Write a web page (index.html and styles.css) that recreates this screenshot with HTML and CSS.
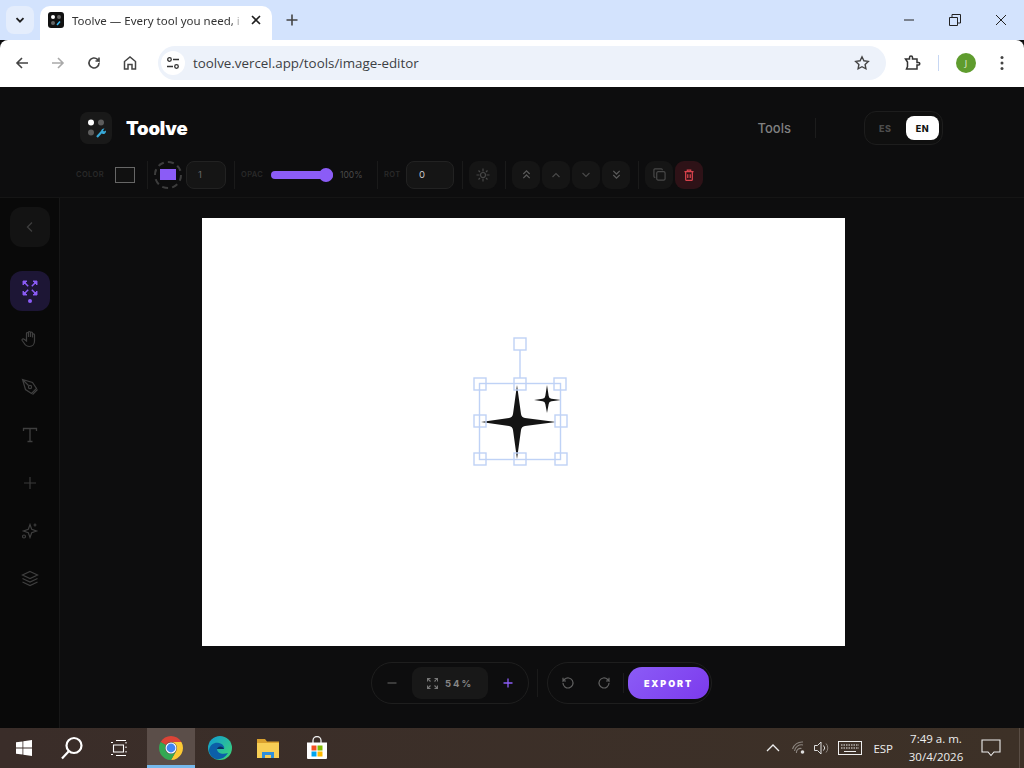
FILE: index.html
```html
<!DOCTYPE html>
<html lang="en">
<head>
<meta charset="utf-8">
<title>Toolve</title>
<link rel="stylesheet" href="styles.css">
</head>
<body>
<div class="tabstrip">
  <button class="tabsearch"><svg width="12" height="12" viewBox="0 0 12 12"><path d="M2.5 4.2 6 7.7l3.5-3.5" fill="none" stroke="#1f1f1f" stroke-width="1.8"/></svg></button>
  <div class="tab">
    <svg class="favicon" width="16" height="16" viewBox="0 0 16 16"><rect width="16" height="16" rx="3" fill="#111"/><circle cx="5" cy="5" r="2" fill="#fff"/><circle cx="11" cy="5" r="2" fill="#666"/><circle cx="5" cy="11" r="2" fill="#666"/><path d="M9 13l3-3.500" stroke="#38bdf8" stroke-width="1.500"/></svg>
    <span class="tabtitle">Toolve — Every tool you need, i</span>
    <svg class="tabclose" width="12" height="12" viewBox="0 0 12 12"><path d="M2 2l8 8M10 2l-8 8" stroke="#1f1f1f" stroke-width="1.600"/></svg>
  </div>
  <svg class="newtab" width="14" height="14" viewBox="0 0 14 14"><path d="M7 1.500v11M1.500 7h11" stroke="#444" stroke-width="1.600"/></svg>
  <div class="winctl">
    <svg width="12" height="12" viewBox="0 0 12 12"><path d="M1 6h10" stroke="#222"/></svg>
    <svg width="12" height="12" viewBox="0 0 12 12"><path d="M.5 3.500h8v8h-8zM3 3.500V.5h8.500V9H8.500" fill="none" stroke="#222"/></svg>
    <svg width="12" height="12" viewBox="0 0 12 12"><path d="M1 1l10 10M11 1L1 11" stroke="#222"/></svg>
  </div>
</div>
<div class="chromebar">
  <div class="navicons">
    <svg width="16" height="16" viewBox="0 0 16 16"><path d="M14 8H3M8 3 3 8l5 5" fill="none" stroke="#444" stroke-width="1.600"/></svg>
    <svg width="16" height="16" viewBox="0 0 16 16"><path d="M2 8h11M8 3l5 5-5 5" fill="none" stroke="#a9a9a9" stroke-width="1.600"/></svg>
    <svg width="16" height="16" viewBox="0 0 16 16"><path d="M13 8a5 5 0 1 1-1.500-3.600L13 6V2.500M13 6H9.500" fill="none" stroke="#444" stroke-width="1.600"/></svg>
    <svg width="16" height="16" viewBox="0 0 16 16"><path d="M2.500 14V6.500L8 2l5.500 4.500V14H10V9.500H6V14z" fill="none" stroke="#444" stroke-width="1.500"/></svg>
  </div>
  <div class="omnibox">
    <span class="siteinfo"><svg width="14" height="14" viewBox="0 0 14 14" fill="none" stroke="#333" stroke-width="1.300"><circle cx="3.500" cy="3.500" r="1.800"/><path d="M7 3.500h6M1 10.500h6"/><circle cx="10.500" cy="10.500" r="1.800"/></svg></span>
    <span class="url">toolve.vercel.app/tools/image-editor</span>
    <svg class="star" width="16" height="16" viewBox="0 0 16 16"><path d="M8 1.800l1.900 4 4.400.6-3.200 3 .8 4.400L8 11.700l-3.900 2.100.8-4.400-3.200-3 4.400-.6z" fill="none" stroke="#444" stroke-width="1.400"/></svg>
  </div>
  <svg class="puzzle" width="18" height="18" viewBox="0 0 18 18"><path d="M2.500 5h4V3.500a1.500 1.500 0 0 1 3 0V5H14v3.500h1.500a1.300 1.300 0 0 1 0 2.600H14V15H3.500l1-2.500V8z" fill="none" stroke="#333" stroke-width="1.500"/></svg>
  <span class="chromesep"></span>
  <span class="avatar">J</span>
  <svg class="kebab" width="4" height="16" viewBox="0 0 4 16"><circle cx="2" cy="2.500" r="1.500" fill="#444"/><circle cx="2" cy="8" r="1.500" fill="#444"/><circle cx="2" cy="13.500" r="1.500" fill="#444"/></svg>
</div>

<div class="app">
  <header class="apphead">
    <div class="brand">
      <span class="logo"><svg width="32" height="32" viewBox="0 0 32 32"><circle cx="11" cy="10.500" r="3" fill="#fff"/><circle cx="21" cy="10.500" r="3" fill="#5c5c5c"/><circle cx="11" cy="20.500" r="3" fill="#5c5c5c"/><path d="M17 25l5-5.500" stroke="#38a9d8" stroke-width="2.200"/><path d="M21 19.500a3 3 0 0 1 3.500-3l-1.500 2 1 1 2-1a3 3 0 0 1-3.500 3.500z" fill="#38a9d8"/></svg></span>
      <span class="brandname">Toolve</span>
    </div>
    <nav class="headnav">
      <a class="navlink">Tools</a>
      <span class="headsep"></span>
      <div class="lang"><span class="lang-es">ES</span><span class="lang-en">EN</span></div>
    </nav>
  </header>

  <div class="optbar">
    <div class="optgroup g-color"><span class="optlabel w-color">COLOR</span><span class="swatch"></span></div>
    <span class="vsep"></span>
    <div class="optgroup g-stroke"><span class="fillring"><span class="fillrect"></span></span><span class="numinput w40">1</span></div>
    <span class="vsep"></span>
    <div class="optgroup g-opac"><span class="optlabel w-opac">OPAC</span><span class="slider"><span class="thumb"></span></span><span class="optvalue">100%</span></div>
    <span class="vsep"></span>
    <div class="optgroup g-rot"><span class="optlabel w-rot">ROT</span><span class="numinput w48 bright">0</span></div>
    <span class="vsep"></span>
    <div class="optgroup"><span class="iconbtn"><svg width="14" height="14" viewBox="0 0 14 14" fill="none" stroke="#474747" stroke-width="1.200"><circle cx="7" cy="7" r="2.500"/><path d="M7 .5v3M7 10.500v3M.5 7h3M10.500 7h3M2.500 2.500l1.500 1.500M10 10l1.500 1.500M11.500 2.500 10 4M4 10l-1.500 1.500"/></svg></span></div>
    <span class="vsep"></span>
    <div class="optgroup g-order">
      <span class="iconbtn"><svg width="11" height="11" viewBox="0 0 12 12" fill="none" stroke="#5a5a5a" stroke-width="1.300"><path d="M2.500 5.500 6 2l3.500 3.500M2.500 10 6 6.500 9.500 10"/></svg></span>
      <span class="iconbtn"><svg width="12" height="12" viewBox="0 0 12 12" fill="none" stroke="#484848" stroke-width="1.200"><path d="M2.500 8 6 4.500 9.500 8"/></svg></span>
      <span class="iconbtn"><svg width="12" height="12" viewBox="0 0 12 12" fill="none" stroke="#484848" stroke-width="1.200"><path d="M2.500 4 6 7.500 9.500 4"/></svg></span>
      <span class="iconbtn"><svg width="11" height="11" viewBox="0 0 12 12" fill="none" stroke="#5a5a5a" stroke-width="1.300"><path d="M2.500 2 6 5.500 9.500 2M2.500 6.500 6 10l3.500-3.500"/></svg></span>
    </div>
    <span class="vsep"></span>
    <div class="optgroup g-order">
      <span class="iconbtn"><svg width="13" height="13" viewBox="0 0 14 14" fill="none" stroke="#484848" stroke-width="1.300"><rect x="4" y="4" width="9" height="9" rx="1.500"/><path d="M10 2.500V2a1 1 0 0 0-1-1H2a1 1 0 0 0-1 1v7a1 1 0 0 0 1 1h.5"/></svg></span>
      <span class="iconbtn danger"><svg width="10" height="12" viewBox="0 0 12 14" fill="none" stroke="#d9434c" stroke-width="1.500"><path d="M.5 3h11M4 3V1.200h4V3M2 3v9.500a1 1 0 0 0 1 1h6a1 1 0 0 0 1-1V3M4.500 6v4.500M7.500 6v4.500"/></svg></span>
    </div>
  </div>

  <div class="workspace">
    <aside class="sidebar">
      <span class="sidebtn back"><svg width="14" height="14" viewBox="0 0 14 14" fill="none" stroke="#3d3d3d" stroke-width="1.400"><path d="M9 2.500 4.500 7 9 11.500"/></svg></span>
      <span class="sidebtn active">
        <svg width="16" height="16" viewBox="0 0 16 16" fill="#8b5cf6" stroke="#8b5cf6" stroke-width=".9"><path d="M1 1h4L1 5zM15 1h-4L15 5zM1 15h4L1 11zM15 15h-4L15 11z"/><path d="M2 2l4.200 4.200M14 2 9.800 6.200M2 14l4.200-4.200M14 14 9.800 9.800" stroke-width="1.500"/></svg>
        <i class="dot"></i>
      </span>
      <span class="sidetool t-hand"><svg width="18" height="18" viewBox="0 0 18 18" fill="none" stroke="#3f3f3f" stroke-width="1.200"><path d="M5.500 8V3.500a1 1 0 0 1 2 0V7M7.500 7V2.500a1 1 0 0 1 2 0V7M9.500 7V3a1 1 0 0 1 2 0v4.500M11.500 7.500V4.800a1 1 0 0 1 2 0V11c0 3-2 5.500-5 5.500-2.500 0-4-1-5.500-3.500L1.200 10.500c-.8-1.300 1-2.300 2-1.200L5.500 11V8"/></svg></span>
      <span class="sidetool"><svg width="18" height="18" viewBox="0 0 18 18" fill="none" stroke="#3f3f3f" stroke-width="1.200"><path d="M1.500 1.500l10 3 4 6-5 5-6-4zM1.500 1.500l6 6"/><circle cx="9" cy="9" r="1.600"/><path d="M11.500 16.500l5-5"/></svg></span>
      <span class="sidetool"><svg width="16" height="16" viewBox="0 0 16 16" fill="none" stroke="#3f3f3f" stroke-width="1.300"><path d="M1.500 4V1.500h13V4M8 1.500v13M5.500 14.500h5"/></svg></span>
      <span class="sidetool"><svg width="14" height="14" viewBox="0 0 14 14" fill="none" stroke="#3a3a3a" stroke-width="1.200"><path d="M7 1v12M1 7h12"/></svg></span>
      <span class="sidetool"><svg width="18" height="18" viewBox="0 0 18 18" fill="none" stroke="#3f3f3f" stroke-width="1.200"><path d="M9 2.500l1.700 4.800 4.800 1.700-4.800 1.700L9 15.500l-1.700-4.800L2.500 9l4.800-1.700z"/><path d="M14 1.500v3M12.500 3h3"/><circle cx="3" cy="14.500" r="1.500"/></svg></span>
      <span class="sidetool"><svg width="18" height="18" viewBox="0 0 18 18" fill="none" stroke="#3f3f3f" stroke-width="1.200"><path d="M9 1.500l7.500 3.500L9 8.500 1.500 5zM1.500 8.500 9 12l7.500-3.500M1.500 12 9 15.500l7.500-3.500"/></svg></span>
    </aside>
    <main class="stage">
      <div class="canvas">
        <svg class="overlay" width="643" height="428" viewBox="202 218 643 428">
          <path class="ink" d="M517 385L521 414Q521.500 417.500 525 418L556 422L525 426Q521.500 426.500 521 430L517 459L513 430Q512.500 426.500 509 426L481 422L509 418Q512.500 417.500 513 414Z"/>
          <path class="ink" d="M547 385L548.700 396Q549 398.500 551.500 398.800L561 400L551.500 401.200Q549 401.500 548.700 404L547 413L545.300 404Q545 401.500 542.500 401.200L534 400L542.500 398.800Q545 398.500 545.300 396Z"/>
          <g class="sel">
            <rect x="479.500" y="383.500" width="81" height="76"/>
            <path d="M520 350V378"/>
            <rect x="514" y="338" width="12" height="12"/>
            <rect x="474" y="378" width="12" height="12"/>
            <rect x="514" y="378" width="12" height="12"/>
            <rect x="554" y="378" width="12" height="12"/>
            <rect x="474" y="415" width="12" height="12"/>
            <rect x="555" y="415" width="12" height="12"/>
            <rect x="474" y="453" width="12" height="12"/>
            <rect x="514" y="453" width="12" height="12"/>
            <rect x="555" y="453" width="12" height="12"/>
          </g>
        </svg>
      </div>
      <div class="dock">
        <div class="pill zoompill">
          <svg width="12" height="12" viewBox="0 0 12 12"><path d="M1.500 6h9" stroke="#555" stroke-width="1.300"/></svg>
          <span class="zoomval"><svg width="11" height="11" viewBox="0 0 11 11" fill="none" stroke="#777" stroke-width="1.100"><path d="M.5 3.500v-3h3M10.500 3.500v-3h-3M.5 7.500v3h3M10.500 7.500v3h-3M1 1l2.500 2.500M10 1 7.500 3.500M1 10l2.500-2.500M10 10 7.500 7.500"/></svg><span>54%</span></span>
          <svg width="12" height="12" viewBox="0 0 12 12"><path d="M1.500 6h9M6 1.500v9" stroke="#8b5cf6" stroke-width="1.300"/></svg>
        </div>
        <span class="docksep"></span>
        <div class="pill actionpill">
          <svg class="hist" width="14" height="14" viewBox="0 0 14 14" fill="none" stroke="#5f5f5f" stroke-width="1.200"><path d="M2 7a5 5 0 1 0 1.600-3.700L2 5V1.800M2 5h3"/></svg>
          <svg class="hist" width="14" height="14" viewBox="0 0 14 14" fill="none" stroke="#5f5f5f" stroke-width="1.200"><path d="M12 7a5 5 0 1 1-1.600-3.700L12 5V1.800M12 5H9"/></svg>
          <span class="pillsep"></span>
          <button class="export">EXPORT</button>
        </div>
      </div>
    </main>
  </div>
</div>

<footer class="taskbar">
  <div class="tb-left">
    <span class="tbslot"><svg width="16" height="16" viewBox="0 0 16 16" fill="#fff"><path d="M0 2.300 6.500 1.400V7.600H0zM7.300 1.300 16 0V7.600H7.300zM0 8.400H6.500V14.600L0 13.700zM7.300 8.400H16V16L7.300 14.700z"/></svg></span>
    <span class="tbslot"><svg width="24" height="24" viewBox="0 0 24 24" fill="none" stroke="#fff" stroke-width="2.200"><circle cx="14" cy="9.500" r="7.500"/><path d="M9 15 2 22.500"/></svg></span>
    <span class="tbslot"><svg width="18" height="16" viewBox="0 0 18 16" fill="none" stroke="#fff" stroke-width="1.100"><path d="M2.500 5h10v7h-10zM0 2.500h2M5 .5h10M0 14.500h2M5 15.500h10M15 2v1.500M15 6.500v1.500M15 11v1.500"/></svg></span>
    <span class="tbslot current"><svg width="24" height="24" viewBox="0 0 24 24"><path fill="#db4437" d="M1.610 6A12 12 0 0 1 22.390 6H12A6 6 0 0 0 6.800 9Z"/><path fill="#fcc934" d="M22.390 6A12 12 0 0 1 12 24L17.200 15A6 6 0 0 0 12 6Z"/><path fill="#34a853" d="M12 24A12 12 0 0 1 1.610 6L6.800 9A6 6 0 0 0 17.200 15Z"/><circle cx="12" cy="12" r="5.500" fill="#fff"/><circle cx="12" cy="12" r="4.400" fill="#4285f4"/></svg></span>
    <span class="tbslot after-current"><svg width="24" height="24" viewBox="0 0 24 24"><defs><linearGradient id="edgeA" x1="0" y1="0" x2="1" y2="1"><stop offset="0" stop-color="#0f9ad6"/><stop offset="1" stop-color="#3fd86f"/></linearGradient></defs><circle cx="12" cy="12" r="12" fill="url(#edgeA)"/><path d="M1 14C2 8 7 6 11 7c4 1 6 4 5 6H9c0 4 5 6 11 4-3 5-8 7-12 6C4 22 1 18 1 14z" fill="#0c5fa8"/><path d="M9 13c1-3 5-3.500 7 0z" fill="#0b2f5e"/></svg></span>
    <span class="tbslot"><svg width="22" height="20" viewBox="0 0 22 20"><path d="M0 1h8l2 2.500h12V6H0z" fill="#d9a12e"/><path d="M0 5h22v15H0z" fill="#f7ce55"/><path d="M5 14h12v6h-3v-3H8v3H5z" fill="#2f8fdc"/></svg></span>
    <span class="tbslot after-current"><svg width="24" height="24" viewBox="0 0 24 24"><path d="M8 7V4.500a4 4 0 0 1 8 0V7" fill="none" stroke="#eee" stroke-width="1.300"/><path d="M2 6.500h20V22a1 1 0 0 1-1 1H3a1 1 0 0 1-1-1z" fill="#fff"/><path fill="#f25022" d="M6.500 9.500h5v5h-5z"/><path fill="#7fba00" d="M12.500 9.500h5v5h-5z"/><path fill="#00a4ef" d="M6.500 15.500h5v5h-5z"/><path fill="#ffb900" d="M12.500 15.500h5v5h-5z"/></svg></span>
  </div>
  <div class="tb-right">
    <svg class="tray t-chev" width="14" height="8" viewBox="0 0 14 8" fill="none" stroke="#eee" stroke-width="1.300"><path d="M1 7l6-6 6 6"/></svg>
    <svg class="tray t-wifi" width="14" height="14" viewBox="0 0 14 14" fill="none" stroke="#8d8680" stroke-width="1.100"><path d="M.5 8A10 10 0 0 1 11 1M2.500 10A7 7 0 0 1 11 4M4.500 12A4 4 0 0 1 9.500 7.500"/><circle cx="10.500" cy="11" r="1.800" fill="#ddd" stroke="none"/></svg>
    <svg class="tray t-vol" width="16" height="14" viewBox="0 0 16 14" fill="none" stroke="#ddd" stroke-width="1"><path d="M.5 4.500h3L7 1v12L3.500 9.500h-3zM9.500 4.500a3.500 3.500 0 0 1 0 5"/><path d="M12 2.500a6.500 6.500 0 0 1 0 9" stroke="#8d8680"/></svg>
    <svg class="tray t-kbd" width="24" height="14" viewBox="0 0 24 14" fill="none" stroke="#eee"><rect x=".5" y=".5" width="23" height="13"/><path d="M3 4h18M3 7h18" stroke-dasharray="1.500 1"/><path d="M6 10.500h12"/></svg>
    <span class="imelang">ESP</span>
    <div class="clock"><span>7:49 a. m.</span><span>30/4/2026</span></div>
    <svg class="tray t-note" width="20" height="18" viewBox="0 0 20 18" fill="none" stroke="#eee" stroke-width="1.100"><path d="M1 1h18v12h-6l-3 3.500L7 13H1z"/></svg>
    <span class="showdesk"></span>
  </div>
</footer>
</body>
</html>
```
FILE: styles.css
```css
* { box-sizing: border-box; }
html, body { margin: 0; padding: 0; }
body { width: 1024px; height: 768px; overflow: hidden; font-family: "Open Sans", "Liberation Sans", sans-serif; background: #0d0d0e; }
svg { display: block; flex: none; }

/* browser chrome */
.tabstrip { height: 40px; background: #d3e3fd; display: flex; align-items: flex-end; position: relative; }
.tabsearch { width: 28px; height: 28px; margin: 0 6px 6px 6px; border: 0; padding: 0; border-radius: 8px; background: #e4edfc; display: flex; align-items: center; justify-content: center; }
.tab { width: 232px; height: 34px; background: #fff; border-radius: 10px 10px 0 0; display: flex; align-items: center; padding: 0 10px 6px 8px; }
.favicon { margin-right: 8px; }
.tabtitle { flex: 1; font-family: "Noto Sans", "Open Sans", sans-serif; font-size: 11.500px; color: #333; white-space: nowrap; -webkit-mask-image: linear-gradient(90deg, #000 92%, transparent 100%); mask-image: linear-gradient(90deg, #000 92%, transparent 100%); }
.tabclose { margin-left: 6px; }
.newtab { margin: 0 0 13px 13px; }
.winctl { margin: 0 17px 14px auto; display: flex; gap: 34px; }
.chromebar { height: 47px; background: #fff; display: flex; align-items: center; padding: 0 0 1px 14px; border-radius: 8px 8px 0 0; }
.navicons { display: flex; gap: 20px; }
.omnibox { width: 728px; height: 34px; margin-left: 20px; border-radius: 17px; background: #edf2fa; display: flex; align-items: center; padding: 0 16px 0 3px; }
.siteinfo { width: 24px; height: 24px; border-radius: 50%; background: #fff; display: flex; align-items: center; justify-content: center; }
.url { flex: 1; margin-left: 8px; font-size: 13.350px; color: #3c4043; }
.puzzle { margin-left: 17px; }
.chromesep { width: 1px; height: 16px; background: #c7d7f3; margin-left: 17px; }
.avatar { width: 20px; height: 20px; border-radius: 50%; background: #5f9c2e; color: #e8f2dc; font-size: 9px; display: flex; align-items: center; justify-content: center; margin-left: 17px; }
.kebab { margin-left: 24px; }

/* app frame */
.app { height: 641px; background: #0d0d0e; display: flex; flex-direction: column; }
.apphead { height: 65px; flex: none; display: flex; align-items: center; justify-content: space-between; padding: 17px 81px 0 80px; }
.brand { display: flex; align-items: center; gap: 14px; }
.logo { width: 32px; height: 32px; border-radius: 8px; background: #191919; }
.brandname { font-family: Inter, "Liberation Sans", sans-serif; font-weight: 900; font-size: 18.500px; color: #fff; letter-spacing: -.2px; }
.headnav { display: flex; align-items: center; }
.navlink { font-family: Inter, "Liberation Sans", sans-serif; font-size: 13px; font-weight: 500; color: #808080; }
.headsep { width: 1px; height: 20px; background: #1c1c1c; margin: 0 48px 0 24px; }
.lang { width: 79px; height: 34px; border: 1px solid #1d1d1d; border-radius: 12px; background: #0f0f0f; display: flex; align-items: center; padding-left: 14px; font-family: Inter, "Liberation Sans", sans-serif; font-size: 9px; font-weight: 800; letter-spacing: .5px; }
.lang-es { width: 27px; color: #4d4d4d; }
.lang-en { width: 33px; height: 24px; border-radius: 8px; background: #fff; color: #111; display: flex; align-items: center; justify-content: center; }

/* options bar */
.optbar { height: 46px; flex: none; display: flex; align-items: center; padding-left: 76px; border-bottom: 1px solid #151515; font-family: Inter, "Liberation Sans", sans-serif; }
.optgroup { display: flex; align-items: center; }
.g-color { gap: 10px; padding-right: 4px; }
.g-stroke { gap: 4px; }
.g-opac { gap: 8px; }
.g-rot { gap: 6px; }
.g-order { gap: 2px; }
.vsep { width: 1px; height: 28px; background: #1a1a1a; margin: 0 6px 0 8px; }
.optlabel { font-size: 7.500px; font-weight: 600; letter-spacing: .4px; color: #292929; white-space: nowrap; }
.w-color { width: 29px; }
.w-opac { width: 22px; }
.w-rot { width: 16px; }
.swatch { width: 20px; height: 16px; border: 1px solid #666; background: #111; }
.fillring { width: 28px; height: 28px; border-radius: 50%; border: 2px dashed #3d3d3d; display: flex; align-items: center; justify-content: center; }
.fillrect { width: 16px; height: 11px; background: #8b5cf6; }
.numinput { height: 28px; border: 1px solid #222; border-radius: 8px; background: #151515; font-size: 9.500px; color: #666; display: flex; align-items: center; padding-left: 11px; }
.numinput.bright { color: #c9c9c9; padding-left: 12px; }
.w40 { width: 40px; }
.w48 { width: 48px; }
.slider { width: 62px; height: 8px; border-radius: 4px; background: #8b5cf6; position: relative; }
.thumb { position: absolute; right: 0; top: -3px; width: 14px; height: 14px; border-radius: 50%; background: #8b5cf6; }
.optvalue { width: 29px; font-size: 8.500px; color: #4a4a4a; margin-left: -1px; }
.iconbtn { width: 28px; height: 28px; border-radius: 9px; background: #151515; display: flex; align-items: center; justify-content: center; }
.iconbtn.danger { background: #2e1217; }

/* workspace */
.workspace { flex: 1; min-height: 0; display: flex; }
.sidebar { width: 60px; flex: none; border-right: 1px solid #171717; display: flex; flex-direction: column; align-items: center; padding: 9px 0 0 1px; background: #090909; }
.sidebtn { width: 40px; height: 40px; border-radius: 12px; display: flex; align-items: center; justify-content: center; flex: none; position: relative; }
.back { background: #131313; margin-bottom: 24px; }
.active { background: #1d1635; padding-bottom: 7px; }
.dot { position: absolute; bottom: 8px; left: 18px; width: 4px; height: 4px; border-radius: 50%; background: #8b5cf6; }
.sidetool { height: 48px; width: 40px; display: flex; align-items: center; justify-content: center; flex: none; }
.t-hand { margin-top: 4px; }
.stage { flex: 1; min-width: 0; display: flex; flex-direction: column; align-items: center; padding: 20px 179px 0 142px; }
.canvas { width: 643px; height: 428px; flex: none; background: #fff; position: relative; }
.overlay { position: absolute; left: 0; top: 0; }
.ink { fill: #141414; }
.sel rect, .sel path { fill: none; stroke: #bfd2f6; stroke-width: 1.400; }
.dock { display: flex; align-items: center; margin-top: 16px; margin-left: 36px; }
.pill { height: 42px; border: 1px solid #1e1e1e; border-radius: 21px; display: flex; align-items: center; flex: none; }
.zoompill { width: 158px; padding: 0 14px; justify-content: space-between; }
.zoomval { width: 76px; height: 32px; border-radius: 9px; background: #181818; display: flex; align-items: center; justify-content: center; gap: 7px; font-family: Inter, "Liberation Sans", sans-serif; font-size: 9.500px; font-weight: 700; letter-spacing: 2px; color: #858585; }
.docksep { width: 1px; height: 28px; background: #1a1a1a; margin: 0 9px 0 8px; }
.actionpill { width: 165px; padding-left: 13px; }
.hist { margin-right: 22px; }
.hist + .hist { margin-right: 12px; }
.pillsep { width: 1px; height: 20px; background: #1c1c1c; margin-right: 4px; }
.export { width: 81px; height: 32px; flex: none; border: 0; padding: 0; border-radius: 14px; background: linear-gradient(135deg, #8b5cf6, #7c3aed); color: #fff; font-family: Inter, "Liberation Sans", sans-serif; font-size: 9px; font-weight: 900; letter-spacing: 1.900px; }

/* taskbar */
.taskbar { height: 40px; background: linear-gradient(90deg, #3a2d29, #3d3127); display: flex; justify-content: space-between; font-family: "Open Sans", "Liberation Sans", sans-serif; color: #eee; }
.tb-left { display: flex; }
.tbslot { width: 48px; height: 40px; display: flex; align-items: center; justify-content: center; }
.current { background: #5b4e49; border-bottom: 3px solid #76b9ed; padding-top: 3px; margin-left: 3px; }
.after-current { margin-left: 1px; }
.tb-right { display: flex; align-items: center; }
.t-chev { margin-right: 12px; }
.t-wifi { margin-right: 8px; }
.t-vol { margin-right: 8px; }
.t-kbd { margin-right: 11px; }
.imelang { font-size: 11.500px; margin-right: 15px; }
.clock { display: flex; flex-direction: column; align-items: center; font-size: 11.500px; line-height: 18px; width: 56px; margin-right: 17px; }
.t-note { margin-right: 18px; }
.showdesk { width: 1px; height: 40px; background: #5a4e45; margin-right: 4px; }
```
